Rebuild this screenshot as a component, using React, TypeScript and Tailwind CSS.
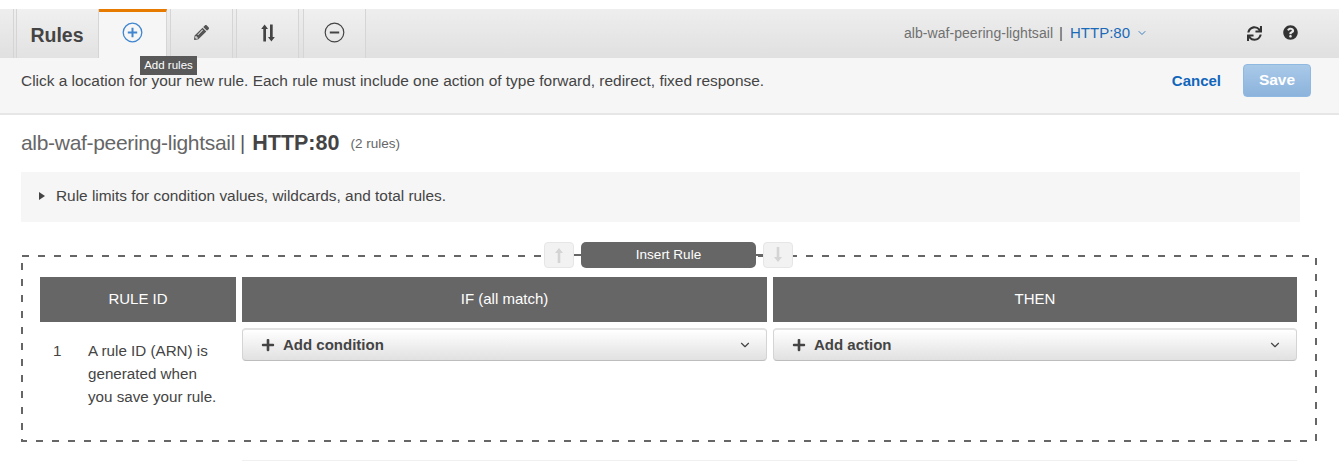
import React from "react";
import { ChevronDown } from "lucide-react";
import { FaQuestionCircle, FaPencilAlt, FaPlus, FaSync } from "react-icons/fa";

const Tab = ({ children }: { children: React.ReactNode }) => (
  <div className="w-[63px] h-full flex items-center justify-center border-l border-r border-[#d5d5d5] bg-gradient-to-b from-[#f0f0f0] to-[#e2e2e2] pb-[2px]">
    {children}
  </div>
);

const Cell = ({ className, children }: { className: string; children: React.ReactNode }) => (
  <div className={`${className} h-[45px] bg-[#666666] text-white text-[15px] flex items-center justify-center`}>{children}</div>
);

const AddButton = ({ label, className }: { label: string; className: string }) => (
  <div className={`${className} h-[33px] rounded-[4px] border border-[#d4d4d4] border-b-[#bdbdbd] border-t-2 border-t-[#e2e2e2] bg-gradient-to-b from-white to-[#e1e1e1] flex items-center pl-[18px] pr-[14px] text-[15px] font-bold text-[#444444]`}>
    <FaPlus className="w-[14px] h-[14px] mr-2 text-[#444444]" />
    <span>{label}</span>
    <ChevronDown className="ml-auto w-[14px] h-[14px] text-[#444444]" strokeWidth={2} />
  </div>
);

export default function App() {
  return (
    <div className="w-[1339px] h-[461px] overflow-hidden bg-white pt-[9px] text-[#444444]" style={{ fontFamily: '"Liberation Sans", Arial, sans-serif' }}>
      <div className="h-[49px] flex items-stretch bg-gradient-to-b from-[#eeeeee] to-[#e0e0e0]">
        <div className="w-[14px] border-r border-[#d5d5d5]" />
        <div className="w-[2px]" />
        <div className="w-[83px] h-full flex items-center justify-center border-l border-r border-[#d5d5d5] bg-gradient-to-b from-[#f0f0f0] to-[#e2e2e2] text-[19.5px] font-bold text-[#444444] pt-[5px] pr-[1px]">Rules</div>
        <div className="relative w-[68px] h-full bg-[#f6f6f6] border-t-[3px] border-t-[#e67b00] border-r border-r-[#d5d5d5] flex items-center justify-center pb-[5px]">
          <svg width="21" height="21" viewBox="0 0 21 21" fill="none">
            <circle cx="10.5" cy="10.5" r="9.3" stroke="#3f86cf" strokeWidth="1.3" />
            <path d="M10.5 5.8v9.4M5.8 10.5h9.4" stroke="#3f86cf" strokeWidth="2" />
          </svg>
          <div className="absolute left-[41px] top-[44px] w-[57px] h-[19px] bg-[#595959] text-white text-[11.5px] flex items-center justify-center z-10 whitespace-nowrap">Add rules</div>
        </div>
        <div className="w-[3px]" />
        <Tab><FaPencilAlt className="w-[15px] h-[15px] text-[#555555]" /></Tab>
        <div className="w-[3px]" />
        <Tab>
          <svg width="14" height="18" viewBox="0 0 14 18" fill="#444444">
            <path d="M3.6 0.5 7 5H5v12.5H2.3V5H0.2zM10.4 17.5 7 13h2V0.5h2.700V13h2.100z" />
          </svg>
        </Tab>
        <div className="w-[4px]" />
        <Tab>
          <svg width="21" height="21" viewBox="0 0 21 21" fill="none">
            <circle cx="10.500" cy="10.500" r="9.300" stroke="#444444" strokeWidth="1.200" />
            <path d="M5.800 10.500h9.400" stroke="#444444" strokeWidth="2" />
          </svg>
        </Tab>
        <div className="flex-1 flex items-center justify-end pb-[1px]">
          <span className="text-[14px] tracking-[0.05px] text-[#707070]">alb-waf-peering-lightsail</span>
          <span className="ml-[6px] mr-[7px] text-[15px] text-[#555555]">|</span>
          <span className="text-[15px] text-[#1b6ab8]">HTTP:80</span>
          <ChevronDown className="ml-[6px] w-[12px] h-[12px] text-[#3d7fbf]" strokeWidth={2} />
          <FaSync className="ml-[99px] w-[15px] h-[15px] text-[#333333]" />
          <FaQuestionCircle className="ml-[21px] mr-[41px] w-[15px] h-[15px] text-[#333333] mb-[2px]" />
        </div>
      </div>

      <div className="h-[57px] bg-[#f6f6f6] border-b-2 border-[#e6e6e6] flex items-center pl-[21px] pr-[28px] pb-[11px] text-[15.45px] text-[#444444]">
        <span className="pt-[2px]">Click a location for your new rule. Each rule must include one action of type forward, redirect, fixed response.</span>
        <span className="ml-auto pt-[2px] text-[15px] font-bold text-[#1166bb] mr-[22px]">Cancel</span>
        <span className="mt-[-3px] w-[68px] h-[33px] rounded-[4px] border border-[#8fb9e0] bg-gradient-to-b from-[#a9c9e8] to-[#8cb3dc] text-white text-[15.5px] font-bold flex items-center justify-center relative top-[1.500px]">Save</span>
      </div>

      <div className="pl-[21px] pr-[22px]">
        <div className="mt-[15px] h-[26px] flex items-center text-[#666666]">
          <span className="text-[21px] tracking-[-0.31px]">alb-waf-peering-lightsail</span>
          <span className="ml-[5px] mr-[7px] text-[20px] text-[#555555]">|</span>
          <span className="text-[21.5px] font-bold text-[#444444]">HTTP:80</span>
          <span className="ml-[11px] text-[13.5px] text-[#666666] mt-[2px]">(2 rules)</span>
        </div>
        <div className="mt-[16px] w-[1279px] h-[50px] bg-[#f6f6f6] flex items-center pl-[18px] pb-[2px] text-[15.4px] text-[#444444]">
          <span className="w-0 h-0 border-y-[4px] border-y-transparent border-l-[6px] border-l-[#444444] mr-[11px]" />
          Rule limits for condition values, wildcards, and total rules.
        </div>

        <div className="relative mt-[33px] w-[1296px] h-[187px] px-[19px] pt-[22px]">
          <svg className="absolute inset-0" width="1296" height="187" fill="none">
            <rect x="1" y="1" width="1294" height="185" stroke="#666666" strokeWidth="2" strokeDasharray="7 9" />
          </svg>
          <div className="absolute left-[523px] top-[-13px] flex items-center">
            <div className="w-[30px] h-[26px] rounded-[4px] border border-[#e6e6e6] bg-[#f2f2f2] flex items-center justify-center">
              <svg width="10" height="16" viewBox="0 0 10 16" fill="#d4d4d4"><path d="M5 1 9 6H6.300v10H3.700V6H1z" /></svg>
            </div>
            <div className="w-[7px] h-[2px] bg-[#666666]" />
            <div className="w-[175px] h-[26px] rounded-[5px] bg-[#666666] text-white text-[13.5px] flex items-center justify-center">Insert Rule</div>
            <div className="w-[7px] h-[2px] bg-[#666666]" />
            <div className="w-[30px] h-[26px] rounded-[4px] border border-[#e6e6e6] bg-[#f2f2f2] flex items-center justify-center">
              <svg width="10" height="16" viewBox="0 0 10 16" fill="#d4d4d4"><path d="M5 15 9 10H6.300V0H3.700v10H1z" /></svg>
            </div>
          </div>

          <div className="flex gap-[6px]">
            <Cell className="w-[196px]">RULE ID</Cell>
            <Cell className="w-[525px]">IF (all match)</Cell>
            <Cell className="w-[524px]">THEN</Cell>
          </div>
          <div className="flex gap-[6px] mt-[6px]">
            <div className="w-[196px] flex pl-[13px] pt-[11px] text-[15.2px] leading-[23px] text-[#444444]">
              <span className="w-[35px] shrink-0">1</span>
              <span className="whitespace-nowrap">A rule ID (ARN) is<br />generated when<br />you save your rule.</span>
            </div>
            <AddButton label="Add condition" className="w-[525px]" />
            <AddButton label="Add action" className="w-[524px]" />
          </div>
        </div>
        <div className="ml-[221px] mt-[18px] w-[1055px] h-[1px] bg-[#f0f0f0]" />
      </div>
    </div>
  );
}
